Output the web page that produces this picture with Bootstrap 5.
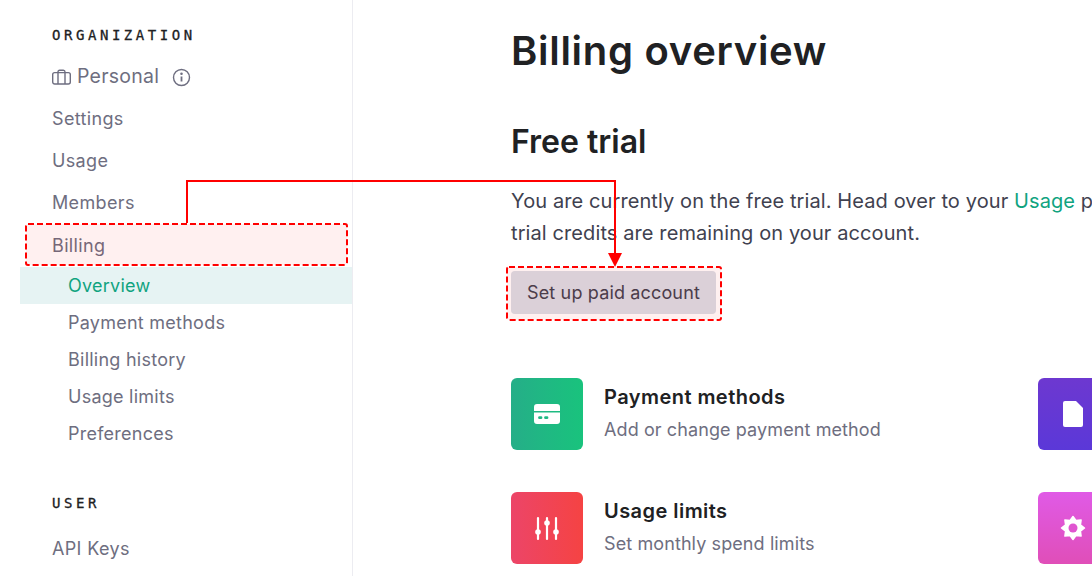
<!DOCTYPE html>
<html lang="en">
<head>
    <meta charset="UTF-8">
    <meta name="viewport" content="width=device-width, initial-scale=1.0">
    <title>Billing overview</title>
    <link href="https://cdn.jsdelivr.net/npm/bootstrap@5.3.3/dist/css/bootstrap.min.css" rel="stylesheet">
    <style>
        html, body { height: 576px; overflow: hidden; }
        body { font-family: "Inter", "Liberation Sans", sans-serif; color: #202123; background: #fff; position: relative; }
        .page-wrap { width: 1092px; height: 576px; overflow: hidden; }
        .side-col { width: 353px; flex: none; height: 576px; padding: 25px 0 0 20px; border-right: 1px solid #ececf1; overflow: hidden; }
        .side-head { font-family: "DejaVu Sans Mono", "Liberation Mono", monospace; font-size: 14px; font-weight: 400; letter-spacing: 3.55px; line-height: 20px; padding-left: 32px; color: #202123; -webkit-text-stroke: .3px #202123; }
        .side-head.user-head { margin-top: 41px; }
        .side-item { display: flex; align-items: center; height: 42.4px; padding-left: 32px; font-size: 18px; letter-spacing: .35px; color: #6e6e80; text-decoration: none; }
        .side-item.org-row { height: 40px; margin-top: 12px; font-size: 19.5px; letter-spacing: .25px; }
        .side-item.key-row { margin-top: 15px; }
        .side-sub { display: flex; align-items: center; height: 37px; padding-left: 48px; font-size: 18px; letter-spacing: .25px; color: #6e6e80; text-decoration: none; }
        .side-sub.is-on { color: #10a37f; background: #e6f3f3; }
        .org-name { margin-left: 6px; }
        .org-info { margin-left: 13px; }
        .main-col { padding: 26px 0 0 158px; width: 739px; flex: none; }
        .page-title { font-size: 40px; font-weight: 600; letter-spacing: .7px; line-height: 50px; margin: 0 0 49px; color: #202123; }
        .sec-title { font-size: 32px; font-weight: 600; line-height: 34px; margin: 0 0 26px; color: #202123; }
        .intro { font-size: 20px; letter-spacing: .1px; line-height: 32px; color: #40414f; width: 800px; margin: 0 0 22px; }
        .intro a { color: #10a37f; text-decoration: none; }
        .paid-btn { display: block; background: #d9dde6; color: #40414f; font-size: 18px; letter-spacing: .15px; line-height: 24px; padding: 0; border-radius: 4px; border: 0; height: 43px; width: 205px; }
        .tile-grid { display: grid; grid-template-columns: 527px 72px; row-gap: 42px; margin-top: 64px; }
        .tile-box { width: 72px; height: 72px; border-radius: 6px; display: flex; align-items: center; justify-content: center; margin-right: 21px; flex: none; }
        .tile-side { padding-right: 2px; }
        .g-green { background: linear-gradient(90deg, #25ae88, #19c37d); }
        .g-red { background: linear-gradient(90deg, #ec4568, #f54343); }
        .g-purple { background: linear-gradient(180deg, #6d38d0, #5b38d8); }
        .g-pink { background: linear-gradient(180deg, #e05ae6, #e04eb8); }
        .tile-title { font-size: 20px; font-weight: 600; letter-spacing: .45px; line-height: 28px; color: #202123; margin-top: 5px; }
        .tile-desc { font-size: 18px; letter-spacing: .1px; line-height: 26px; color: #6e6e80; margin-top: 6px; }
        .arrow-layer { position: absolute; left: 0; top: 0; pointer-events: none; }
    </style>
</head>
<body>
    <div class="page-wrap d-flex">
        <div class="side-col">
            <div class="side-head">ORGANIZATION</div>
            <div class="side-item org-row">
                <svg width="19" height="16" viewBox="0 0 19 16" fill="none" stroke="#6e6e80" stroke-width="1.4" class="flex-shrink-0"><rect x=".7" y="3.6" width="17.6" height="11.4" rx="2"/><path d="M6 15V3c0-1 .6-1.800 1.600-1.800h3.800c1 0 1.600.8 1.600 1.800v12"/></svg>
                <span class="org-name">Personal</span>
                <svg width="19" height="19" viewBox="0 0 19 19" fill="none" stroke="#6e6e80" stroke-width="1.4" class="org-info flex-shrink-0"><circle cx="9.500" cy="9.500" r="8"/><path d="M9.500 8.500v5" stroke-width="1.800"/><circle cx="9.500" cy="5.800" r=".6" fill="#6e6e80"/></svg>
            </div>
            <a class="side-item" href="#">Settings</a>
            <a class="side-item" href="#">Usage</a>
            <a class="side-item" href="#">Members</a>
            <a class="side-item" href="#">Billing</a>
            <a class="side-sub is-on" href="#">Overview</a>
            <a class="side-sub" href="#">Payment methods</a>
            <a class="side-sub" href="#">Billing history</a>
            <a class="side-sub" href="#">Usage limits</a>
            <a class="side-sub" href="#">Preferences</a>
            <div class="side-head user-head">USER</div>
            <a class="side-item key-row" href="#">API Keys</a>
        </div>
        <div class="main-col">
            <h1 class="page-title">Billing overview</h1>
            <h2 class="sec-title">Free trial</h2>
            <p class="intro">You are currently on the free trial. Head over to your <a href="#">Usage</a> page to see how many trial credits are remaining on your account.</p>
            <button class="paid-btn" type="button">Set up paid account</button>
            <div class="tile-grid">
                <div class="d-flex">
                    <div class="tile-box g-green">
                        <svg width="26" height="20" viewBox="0 0 26 20"><path fill="#fff" fill-rule="evenodd" d="M3 0h20a3 3 0 0 1 3 3v4H0V3a3 3 0 0 1 3-3zM0 8.500h26V17a3 3 0 0 1-3 3H3a3 3 0 0 1-3-3zm5.500 3.800a1.400 1.400 0 0 0 0 2.800H7a1.400 1.400 0 0 0 0-2.800zm6 0a1.400 1.400 0 0 0 0 2.800H13a1.400 1.400 0 0 0 0-2.800z"/></svg>
                    </div>
                    <div>
                        <div class="tile-title">Payment methods</div>
                        <div class="tile-desc">Add or change payment method</div>
                    </div>
                </div>
                <div class="tile-box tile-side g-purple">
                    <svg width="20" height="26" viewBox="0 0 20 26"><path fill="#fff" d="M2 0h11l7 7v17a2 2 0 0 1-2 2H2a2 2 0 0 1-2-2V2a2 2 0 0 1 2-2z"/></svg>
                </div>
                <div class="d-flex">
                    <div class="tile-box g-red">
                        <svg width="26" height="26" viewBox="0 0 26 26" fill="#fff"><g stroke="#fff" stroke-width="2.200" stroke-linecap="round"><path d="M4 3v21M13 3v21M22 3v21"/></g><circle cx="4" cy="17" r="2.800"/><circle cx="13" cy="8" r="2.800"/><circle cx="22" cy="17" r="2.800"/></svg>
                    </div>
                    <div>
                        <div class="tile-title">Usage limits</div>
                        <div class="tile-desc">Set monthly spend limits</div>
                    </div>
                </div>
                <div class="tile-box tile-side g-pink">
                    <svg width="26" height="26" viewBox="0 0 26 26"><path fill="#fff" stroke="#fff" stroke-width="1.500" stroke-linejoin="round" d="M13 1.500L16.100 5.600 21.100 4.900 20.400 9.900 24.500 13 20.400 16.100 21.100 21.100 16.100 20.400 13 24.500 9.900 20.400 4.900 21.100 5.600 16.100 1.500 13 5.600 9.900 4.900 4.900 9.900 5.600z"/><circle cx="13" cy="13" r="4.500" fill="#e055d0"/></svg>
                </div>
            </div>
        </div>
    </div>

    <!-- annotation drawn on top of the page -->
    <svg class="arrow-layer" width="1092" height="576" fill="none">
        <rect x="26" y="224" width="321" height="41" rx="2" fill="#f00" fill-opacity=".06" stroke="#f00" stroke-width="2" stroke-dasharray="6 3"/>
        <rect x="507" y="267" width="214" height="53" rx="2" fill="#f00" fill-opacity=".06" stroke="#f00" stroke-width="2" stroke-dasharray="6 3"/>
        <path d="M187 223V181H615V254" stroke="#f00" stroke-width="2"/>
        <path d="M608 253h14l-7 14z" fill="#f00"/>
    </svg>
</body>
</html>
